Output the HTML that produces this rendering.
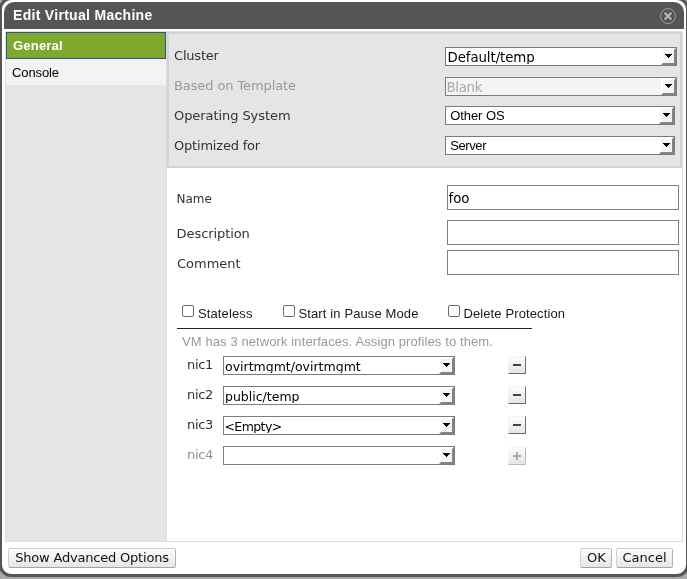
<!DOCTYPE html>
<html>
<head>
<meta charset="utf-8">
<title>Edit Virtual Machine</title>
<style>
html,body{margin:0;padding:0;}
body{width:687px;height:579px;overflow:hidden;position:relative;background:linear-gradient(#9fa9ba 0,#9fa9ba 30px,#a9a9a9 31px);
  font-family:"DejaVu Sans","Liberation Sans",sans-serif;font-size:13px;color:#333;}
#wrap{position:absolute;left:0;top:0;width:687px;height:579px;overflow:hidden;will-change:transform;}
.a{position:absolute;white-space:nowrap;line-height:1;}
.dj{font-family:"DejaVu Sans","Liberation Sans",sans-serif;}
.lib{font-family:"Liberation Sans","DejaVu Sans",sans-serif;}
#dlg{position:absolute;left:-1px;top:-3px;width:690px;height:580px;box-sizing:border-box;
  border:3px solid #555;border-radius:12px;background:#fff;}
#hdr{position:absolute;left:4px;top:2px;width:680px;height:27px;background:#555;
  border-radius:10px 10px 0 0;}
#title{left:13px;top:8px;font-size:14px;font-weight:bold;color:#fff;letter-spacing:0.3px;}
#frame{position:absolute;left:5px;top:31px;width:678px;height:511px;box-sizing:border-box;border:1px solid #d7dfe8;background:#fff;}
#left{position:absolute;left:6px;top:32px;width:160px;height:509px;background:#e5e5e5;}
#split{position:absolute;left:166px;top:32px;width:1px;height:509px;background:#d7dfe8;}
#tabG{position:absolute;left:6px;top:32px;width:160px;height:27px;box-sizing:border-box;border:1px solid #2f5782;background:#7fa82f;}
#tabC{position:absolute;left:6px;top:59px;width:160px;height:26px;background:#f3f3f3;}
#top{position:absolute;left:167px;top:32px;width:515px;height:136px;box-sizing:border-box;border:2px solid #d3d3d3;background:#e5e5e5;}
.lbl{font-size:13px;color:#333;}
.dis{color:#999;}
/* select look */
.sel{position:absolute;box-sizing:border-box;height:19px;border:1px solid #7b7b7b;background:#fff;overflow:hidden;}
.sel .t{position:absolute;left:2px;top:3px;white-space:nowrap;line-height:1;font-size:13.33px;color:#000;}
.sel .c{position:absolute;left:0;top:0;right:15px;height:16px;overflow:hidden;}
.sel.n .t{font-size:12.5px;top:3.5px;left:1px;}
.sel.lib .t{font-size:13px;left:4.2px;top:2px;}
.sel .b{position:absolute;right:0;top:0;width:15px;height:17px;box-sizing:border-box;border:2px solid;border-color:#fff #848484 #848484 #fff;background:#f5f5f4;}
.sel .b:after{content:"";position:absolute;left:2px;top:4px;width:7px;height:4px;background:linear-gradient(#000,#000) 0 0/7px 1px no-repeat,linear-gradient(#000,#000) 1px 1px/5px 1px no-repeat,linear-gradient(#000,#000) 2px 2px/3px 1px no-repeat,linear-gradient(#000,#000) 3px 3px/1px 1px no-repeat;}
.sel.d{background:#f4f4f4;}
.sel.d .t{color:#aaa;}
.inp{position:absolute;box-sizing:border-box;left:447px;width:232px;height:25px;border:1px solid #7f7f7f;background:#fff;}
.cb{position:absolute;box-sizing:border-box;width:12px;height:12px;border:1px solid #6d6965;border-radius:2px;background:#fff;}
.cl{font-size:13px;color:#1a1a1a;letter-spacing:0.12px;}
.nb{position:absolute;box-sizing:border-box;left:508px;width:18px;height:18px;border:1px solid;border-color:#f2f2f2 #6a6a6a #6a6a6a #f2f2f2;background:linear-gradient(#fcfcfc,#e6e6e6);}
.nb i{position:absolute;background:#444;}
.nb.d{border-color:#f6f6f6 #b8b8b8 #b8b8b8 #f6f6f6;}
.nb.d i{background:#aaa;}
.btn{position:absolute;box-sizing:border-box;height:20px;border:1px solid;border-color:#cdcdcd #b2b2b2 #a4a4a4 #d2d2d2;border-radius:2px;background:linear-gradient(#fcfcfc,#e5e5eb);font-size:13px;color:#111;text-align:center;line-height:17px;white-space:nowrap;}
</style>
</head>
<body>
<div id="wrap">
<div id="dlg"></div>
<div id="hdr"></div>
<div id="title" class="a lib">Edit Virtual Machine</div>
<svg class="a" style="left:659px;top:7px" width="18" height="18" viewBox="0 0 18 18">
  <circle cx="9" cy="9.1" r="7.5" fill="none" stroke="#9c9c9c" stroke-width="1"/>
  <path d="M5.6 5.7 L12.4 12.5 M12.4 5.7 L5.6 12.5" stroke="#b9b9b9" stroke-width="2" fill="none"/>
</svg>

<div id="frame"></div>
<div id="left"></div>
<div id="split"></div>
<div id="tabG"></div>
<div id="tabC"></div>
<div class="a lib" style="left:13px;top:39px;font-size:13px;font-weight:bold;color:#fff;letter-spacing:0.2px;">General</div>
<div class="a lib" style="left:12px;top:66px;font-size:13px;color:#000;letter-spacing:-0.1px;">Console</div>

<div id="top"></div>
<div class="a lbl" style="left:174px;top:49px;letter-spacing:-0.2px;">Cluster</div>
<div class="a lbl dis" style="left:174px;top:79px;letter-spacing:-0.1px;">Based on Template</div>
<div class="a lbl" style="left:174px;top:109px;letter-spacing:-0.07px;">Operating System</div>
<div class="a lbl" style="left:174px;top:139px;letter-spacing:-0.2px;">Optimized for</div>

<div class="sel dj" style="left:445px;top:47px;width:232px;"><span class="c"><span class="t" style="left:1.5px;letter-spacing:-0.08px">Default/temp</span></span><span class="b"></span></div>
<div class="sel dj d" style="left:445px;top:77px;width:232px;"><span class="c"><span class="t" style="letter-spacing:-0.3px;left:0.5px">Blank</span></span><span class="b"></span></div>
<div class="sel lib" style="left:445px;top:106px;width:230px;"><span class="c"><span class="t" style="letter-spacing:-0.07px">Other OS</span></span><span class="b"></span></div>
<div class="sel lib" style="left:445px;top:136px;width:230px;"><span class="c"><span class="t" style="letter-spacing:-0.4px">Server</span></span><span class="b"></span></div>

<div class="a lbl" style="left:176.5px;top:193px;font-size:12px;">Name</div>
<div class="a lbl" style="left:176.6px;top:227px;letter-spacing:-0.08px;">Description</div>
<div class="a lbl" style="left:177px;top:257px;">Comment</div>
<div class="inp" style="top:185px;"><span class="a dj" style="left:0.5px;top:6px;font-size:13.33px;color:#000;">foo</span></div>
<div class="inp" style="top:220px;"></div>
<div class="inp" style="top:250px;"></div>

<div class="cb" style="left:182px;top:305px;"></div>
<div class="a lib cl" style="left:198px;top:307px;">Stateless</div>
<div class="cb" style="left:283px;top:305px;"></div>
<div class="a lib cl" style="left:298.5px;top:307px;">Start in Pause Mode</div>
<div class="cb" style="left:448px;top:305px;"></div>
<div class="a lib cl" style="left:463.4px;top:307px;">Delete Protection</div>
<div class="a" style="left:177px;top:328px;width:355px;height:1px;background:#222;"></div>
<div class="a lib" style="left:182px;top:335px;font-size:13px;color:#999;letter-spacing:0.1px;">VM has 3 network interfaces. Assign profiles to them.</div>

<div class="a lbl" style="left:187px;top:358px;letter-spacing:-0.3px;">nic1</div>
<div class="a lbl" style="left:187px;top:388px;letter-spacing:-0.3px;">nic2</div>
<div class="a lbl" style="left:187px;top:418px;letter-spacing:-0.3px;">nic3</div>
<div class="a lbl" style="left:187px;top:448px;letter-spacing:-0.3px;color:#929292;">nic4</div>
<div class="sel dj n" style="left:223px;top:356px;width:232px;"><span class="c"><span class="t">ovirtmgmt/ovirtmgmt</span></span><span class="b"></span></div>
<div class="sel dj n" style="left:223px;top:386px;width:232px;"><span class="c"><span class="t">public/temp</span></span><span class="b"></span></div>
<div class="sel dj n" style="left:223px;top:416px;width:232px;"><span class="c"><span class="t" style="letter-spacing:-0.6px;left:0.5px">&lt;Empty&gt;</span></span><span class="b"></span></div>
<div class="sel dj n" style="left:223px;top:446px;width:232px;"><span class="c"><span class="t"></span></span><span class="b"></span></div>
<div class="nb" style="top:356px;"><i style="left:4px;top:7px;width:8px;height:2px;"></i></div>
<div class="nb" style="top:386px;"><i style="left:4px;top:7px;width:8px;height:2px;"></i></div>
<div class="nb" style="top:416px;"><i style="left:4px;top:7px;width:8px;height:2px;"></i></div>
<div class="nb d" style="top:447px;"><i style="left:4px;top:7px;width:8px;height:2px;"></i><i style="left:7px;top:4px;width:2px;height:8px;"></i></div>

<div class="btn dj" style="left:8px;top:548px;width:168px;letter-spacing:-0.2px;">Show Advanced Options</div>
<div class="btn dj" style="left:580px;top:548px;width:32px;padding-left:1px;">OK</div>
<div class="btn dj" style="left:616px;top:548px;width:57px;">Cancel</div>
</div>
</body>
</html>
